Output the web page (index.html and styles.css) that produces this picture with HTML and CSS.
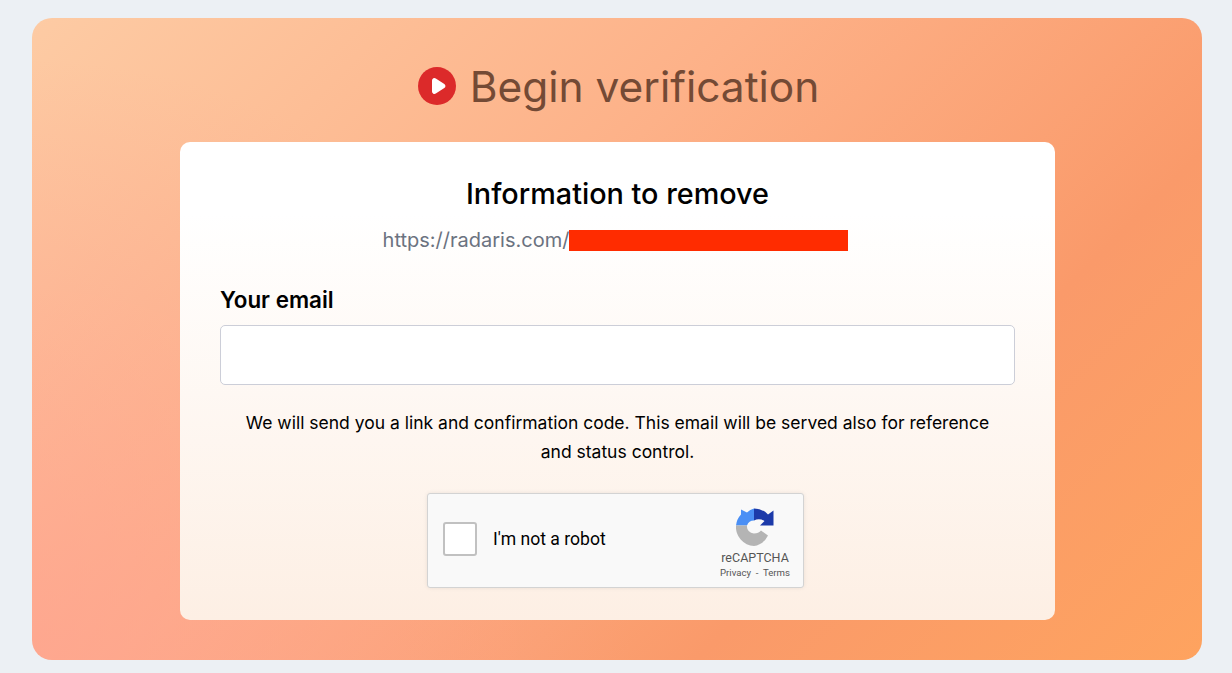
FILE: index.html
```
<!DOCTYPE html>
<html lang="en">
<head>
<meta charset="utf-8">
<title>Begin verification</title>
<link rel="stylesheet" href="styles.css">
</head>
<body>
<main class="panel">
  <h1 class="title">
    <svg class="play" viewBox="0 0 38 38"><circle cx="19" cy="19" r="19" fill="#dc2a2a"/><path d="M14 13.500a2.500 2.500 0 0 1 3.800-2.100l8.500 5.500a2.500 2.500 0 0 1 0 4.200l-8.500 5.500a2.500 2.500 0 0 1-3.800-2.100z" fill="#fff"/></svg>
    <span>Begin verification</span>
  </h1>
  <section class="card">
    <h2 class="card-title">Information to remove</h2>
    <div class="url"><span>https://radaris.com/</span><span class="redact"></span></div>
    <label class="label" for="email">Your email</label>
    <input class="input" id="email" type="text">
    <p class="note">We will send you a link and confirmation code. This email will be served also for reference and status control.</p>
    <div class="captcha">
      <span class="box"></span>
      <span class="robot">I'm not a robot</span>
      <div class="brand">
        <svg class="logo" viewBox="0 0 38 38">
          <path d="M18 0a19 19 0 0 1 14 6L37.500 2v15H24l4.500-4.500A11 11 0 0 0 18 12z" fill="#1c3aa9"/>
          <path d="M18 0v12a7.500 7.500 0 0 0-7 5H0A19 19 0 0 1 5 6V1l6 3A19 19 0 0 1 18 0z" fill="#4a8ff5"/>
          <path d="M0 17h11a7 7 0 0 0 7 8c3 0 5.500-1 7-3l7 5a19 19 0 0 1-14 10.500A19 19 0 0 1 0 17z" fill="#b4b4b4"/>
        </svg>
        <span class="rc">reCAPTCHA</span>
        <span class="links">Privacy&nbsp; -&nbsp; Terms</span>
      </div>
    </div>
  </section>
</main>
</body>
</html>
```
FILE: styles.css
```
* { box-sizing: border-box; }
html, body { margin: 0; height: 673px; overflow: hidden; }
body { background: #ecf0f4; padding: 18px 30px 13px 32px; font-family: Inter, "Liberation Sans", sans-serif; }
.panel { height: 642px; border-radius: 20px; background: radial-gradient(circle at 0% 100%, rgba(255,160,145,.65), rgba(255,160,145,0) 45%), linear-gradient(135deg, #fdcba4 0%, #fdb188 40%, #fa9a6a 72%, #fea35f 100%); padding: 42px 147px 40px 148px; display: flex; flex-direction: column; align-items: stretch; }
.title { margin: 0 0 30px; padding-left: 2px; height: 52px; display: flex; align-items: center; justify-content: center; gap: 14px; font-size: 42.45px; font-weight: 400; color: #744a35; }
.play { width: 38px; height: 38px; }
.card { flex: 1; background: linear-gradient(180deg, #fff 0%, #fff 15%, #fdefe4 100%); border-radius: 10px; padding: 34px 40px 32px; display: flex; flex-direction: column; align-items: center; }
.card-title { margin: 0; font-size: 28.8px; line-height: 36px; font-weight: 500; color: #000; }
.url { margin: 16px 4px 0 0; display: flex; align-items: center; height: 24px; font-size: 20px; color: #6b7280; }
.redact { width: 279px; height: 21px; background: #ff2c00; }
.label { align-self: flex-start; margin-top: 34px; font-size: 22.4px; line-height: 28px; font-weight: 600; color: #000; }
.input { width: 100%; height: 60px; margin-top: 11px; background: #fff; border: 1px solid #ccced8; border-radius: 5px; }
.note { margin: 23px 0 0; max-width: 760px; text-align: center; font-size: 17.5px; line-height: 29px; color: #000; }
.captcha { width: 377px; height: 95px; margin: 27px 4px 0 0; flex: none; display: flex; align-items: center; background: #f9f9f9; border: 1px solid #d3d3d3; border-radius: 3px; box-shadow: 0 0 4px rgba(0,0,0,.08); padding: 0 13px 4px 15px; font-family: Roboto, "Liberation Sans", sans-serif; }
.box { width: 34px; height: 34px; background: #fff; border: 2px solid #c1c1c1; border-radius: 3px; }
.robot { margin-left: 16px; font-size: 17.6px; color: #000; flex: 1; }
.brand { display: flex; flex-direction: column; align-items: center; padding-top: 10px; color: #555; }
.logo { width: 38px; height: 39px; }
.rc { font-size: 12.500px; line-height: 15px; margin-top: 3px; }
.links { font-size: 9.6px; line-height: 14px; margin-top: 1px; }
```
